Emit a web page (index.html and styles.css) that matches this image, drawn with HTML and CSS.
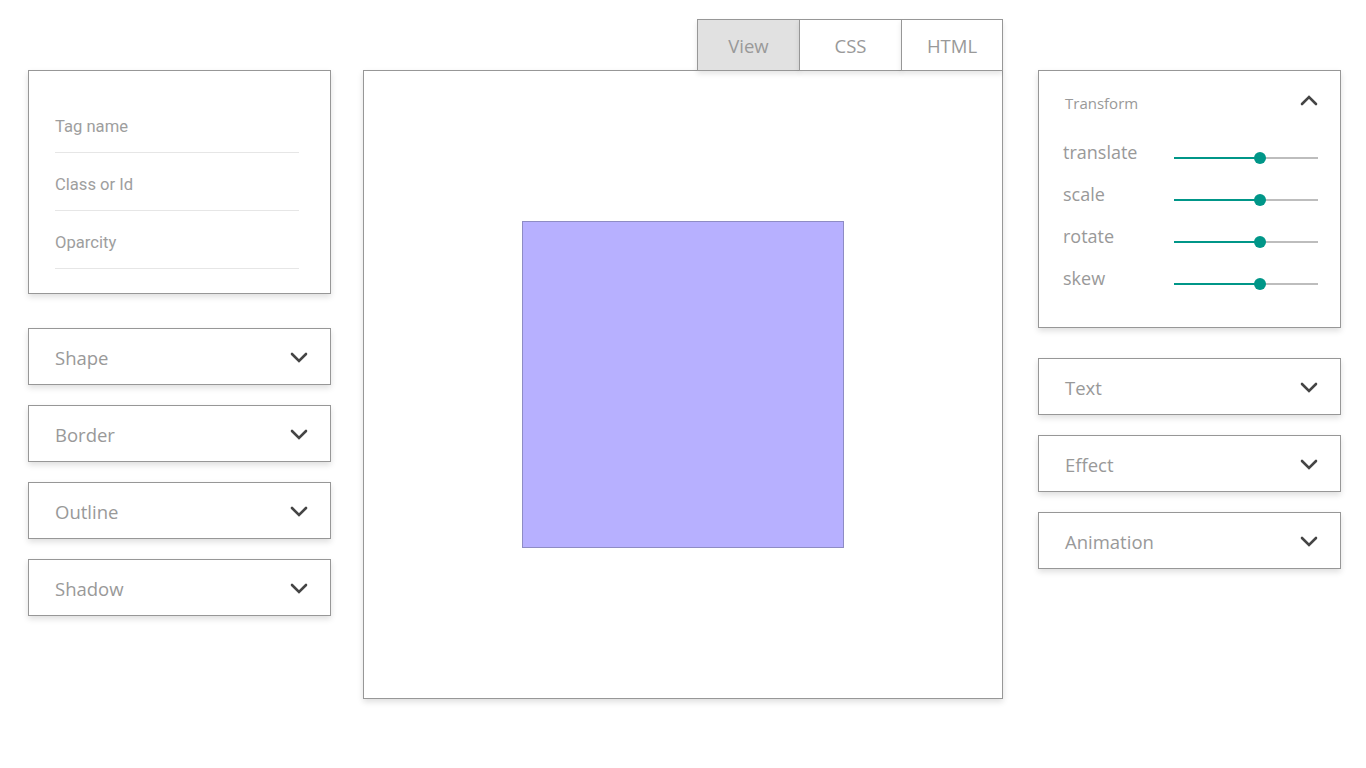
FILE: index.html
```html
<!DOCTYPE html>
<html>
<head>
<meta charset="utf-8">
<link rel="stylesheet" href="styles.css">
</head>
<body>
<div class="app">
  <aside class="col col-left">
    <div class="card fields">
      <div class="field">Tag name</div>
      <div class="field">Class or Id</div>
      <div class="field">Oparcity</div>
    </div>
    <div class="acc">
      <div class="acc-item"><span>Shape</span><svg class="chev" viewBox="0 0 18 12"><polyline points="2,2 9,9 16,2"/></svg></div>
      <div class="acc-item"><span>Border</span><svg class="chev" viewBox="0 0 18 12"><polyline points="2,2 9,9 16,2"/></svg></div>
      <div class="acc-item"><span>Outline</span><svg class="chev" viewBox="0 0 18 12"><polyline points="2,2 9,9 16,2"/></svg></div>
      <div class="acc-item"><span>Shadow</span><svg class="chev" viewBox="0 0 18 12"><polyline points="2,2 9,9 16,2"/></svg></div>
    </div>
  </aside>

  <main class="col col-center">
    <div class="tabs">
      <div class="tab active">View</div>
      <div class="tab">CSS</div>
      <div class="tab last">HTML</div>
    </div>
    <div class="canvas">
      <div class="shape"></div>
    </div>
  </main>

  <aside class="col col-right">
    <div class="card transform">
      <div class="t-head"><span>Transform</span><svg class="chev up" viewBox="0 0 18 12"><polyline points="2,10 9,3 16,10"/></svg></div>
      <div class="t-row"><span class="t-label">translate</span><div class="slider"><div class="fill" style="width:60%"></div><div class="thumb" style="left:60%"></div></div></div>
      <div class="t-row"><span class="t-label">scale</span><div class="slider"><div class="fill" style="width:60%"></div><div class="thumb" style="left:60%"></div></div></div>
      <div class="t-row"><span class="t-label">rotate</span><div class="slider"><div class="fill" style="width:60%"></div><div class="thumb" style="left:60%"></div></div></div>
      <div class="t-row"><span class="t-label">skew</span><div class="slider"><div class="fill" style="width:60%"></div><div class="thumb" style="left:60%"></div></div></div>
    </div>
    <div class="acc">
      <div class="acc-item"><span>Text</span><svg class="chev" viewBox="0 0 18 12"><polyline points="2,2 9,9 16,2"/></svg></div>
      <div class="acc-item"><span>Effect</span><svg class="chev" viewBox="0 0 18 12"><polyline points="2,2 9,9 16,2"/></svg></div>
      <div class="acc-item"><span>Animation</span><svg class="chev" viewBox="0 0 18 12"><polyline points="2,2 9,9 16,2"/></svg></div>
    </div>
  </aside>
</div>
</body>
</html>
```

FILE: styles.css
```css
* { box-sizing: border-box; }
html, body { margin: 0; padding: 0; background: #fff; }
body {
  font-family: "Open Sans", "Noto Sans", sans-serif;
  color: #999;
  width: 1366px;
  height: 768px;
  overflow: hidden;
}
.app {
  display: flex;
  align-items: flex-start;
  padding: 19px 0 0 28px;
}
.col-left { width: 303px; margin-top: 51px; }
.col-center { width: 640px; margin-left: 32px; }
.col-right { width: 303px; margin-left: 35px; margin-top: 51px; }

.card {
  border: 1px solid #979797;
  background: #fff;
  box-shadow: 0 3px 6px rgba(0,0,0,0.13);
}

/* left fields */
.fields { padding: 24px 31px 24px 26px; height: 224px; }
.field {
  font-family: Roboto, "Open Sans", sans-serif;
  font-size: 16.6px;
  line-height: 20px;
  color: #9e9e9e;
  padding: 22px 0 15px 0;
  border-bottom: 1px solid #e6e6e6;
}

/* accordions */
.acc { display: flex; flex-direction: column; gap: 20px; margin-top: 34px; }
.col-right .acc { margin-top: 30px; }
.acc-item {
  height: 57px;
  border: 1px solid #979797;
  background: #fff;
  box-shadow: 0 3px 6px rgba(0,0,0,0.13);
  display: flex;
  align-items: center;
  justify-content: space-between;
  padding: 0 22px 0 26px;
  font-size: 18.5px;
  color: #999;
}
.acc-item span { margin-top: 2px; }
.acc-item .chev { transform: translateY(1px); }
.chev { width: 18px; height: 12px; display: block; }
.chev polyline { fill: none; stroke: #454545; stroke-width: 2.6; stroke-linecap: round; stroke-linejoin: miter; }
.t-head .chev.up { transform: translateY(-3px); }

/* center */
.tabs { display: flex; justify-content: flex-end; height: 52px; position: relative; z-index: 1; }
.tab {
  width: 103px;
  height: 52px;
  margin-left: -1px;
  border: 1px solid #979797;
  background: #fff;
  display: flex;
  align-items: center;
  justify-content: center;
  font-size: 18.5px;
  color: #999;
  box-shadow: 0 3px 5px rgba(0,0,0,0.10);
}
.tab.last { width: 102px; }
.tab.active { background: #e1e1e1; }
.canvas {
  height: 629px;
  margin-top: -1px;
  border: 1px solid #979797;
  background: #fff;
  box-shadow: 0 3px 6px rgba(0,0,0,0.13);
  display: flex;
  align-items: center;
  justify-content: center;
}
.shape {
  width: 322px;
  height: 327px;
  background: #b7b0ff;
  border: 1px solid #8e8cc4;
}

/* transform */
.transform { height: 258px; padding: 20px 22px 27px 24px; }
.t-head {
  display: flex;
  align-items: center;
  justify-content: space-between;
  height: 24px;
  font-size: 15px;
  color: #999;
  margin-bottom: 16px;
}
.t-head span { padding-left: 2px; transform: translateY(-0.5px); }
.t-row {
  height: 42px;
  display: flex;
  align-items: center;
  justify-content: space-between;
}
.t-label { font-size: 18px; color: #999; }
.slider {
  position: relative;
  width: 144px;
  height: 2px;
  background: #bdbdbd;
  margin-top: 12px;
}
.fill { position: absolute; left: 0; top: 0; height: 2px; background: #009688; }
.thumb {
  position: absolute;
  top: 1px;
  width: 12px;
  height: 12px;
  border-radius: 50%;
  background: #009688;
  transform: translate(-50%, -50%);
}
```
